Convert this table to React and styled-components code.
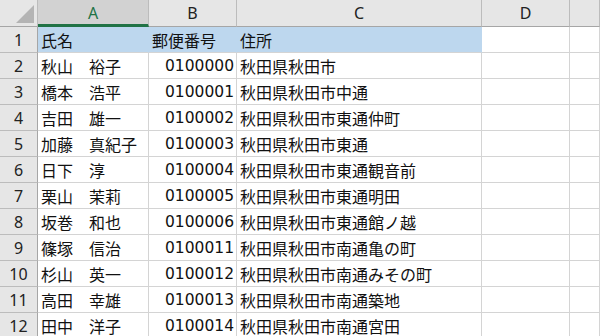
import React from "react";
import styled, { createGlobalStyle } from "styled-components";

const Global = createGlobalStyle`
  html, body { margin: 0; padding: 0; background: #fff; overflow: hidden; }
  body { font-family: "Noto Sans CJK JP", "Noto Sans", sans-serif; }
`;

const Sheet = styled.div`
  display: grid;
  grid-template-columns: 38px 111px 88px 245px 88px 1fr;
  grid-auto-rows: 26px;
  grid-template-rows: 27px;
  width: 600px;
  height: 336px;
  overflow: hidden;
`;

const Corner = styled.div`
  position: relative;
  background: #e6e6e6;
  border-right: 1px solid #bcbcbc;
  border-bottom: 1px solid #a6a6a6;
  box-sizing: border-box;
  svg { position: absolute; right: 3px; bottom: 3px; }
`;

const ColHead = styled.div`
  display: flex;
  align-items: center;
  justify-content: center;
  box-sizing: border-box;
  background: ${(p) => (p.$active ? "#d2d2d2" : "#e6e6e6")};
  border-right: 1px solid #bcbcbc;
  border-bottom: ${(p) => (p.$active ? "3px solid #217346" : "1px solid #a6a6a6")};
  color: ${(p) => (p.$active ? "#217346" : "#222")};
  font-family: "Noto Sans", sans-serif;
  font-size: 16px;
  padding-top: ${(p) => (p.$active ? "2px" : "0")};
`;

const RowHead = styled.div`
  display: flex;
  align-items: center;
  justify-content: center;
  box-sizing: border-box;
  background: #e6e6e6;
  border-right: 1px solid #a6a6a6;
  border-bottom: 1px solid #bcbcbc;
  color: #222;
  font-family: "Noto Sans", sans-serif;
  font-size: 16px;
`;

const Cell = styled.div`
  display: flex;
  align-items: center;
  justify-content: ${(p) => (p.$num ? "flex-end" : "flex-start")};
  box-sizing: border-box;
  padding: ${(p) => (p.$num ? "0 2px 0 0" : "0 0 0 3px")};
  background: ${(p) => (p.$fill ? "#bdd7ee" : "#fff")};
  border-right: 1px solid ${(p) => (p.$fill ? "#bdd7ee" : "#d4d4d4")};
  border-bottom: 1px solid #d4d4d4;
  color: #111;
  font-family: ${(p) => (p.$num ? '"DejaVu Sans", sans-serif' : '"Noto Sans CJK JP", sans-serif')};
  font-size: ${(p) => (p.$num ? "15.5px" : "16px")};
  white-space: pre;
  overflow: hidden;
`;

const rows = [
  ["秋山　裕子", "0100000", "秋田県秋田市"],
  ["橋本　浩平", "0100001", "秋田県秋田市中通"],
  ["吉田　雄一", "0100002", "秋田県秋田市東通仲町"],
  ["加藤　真紀子", "0100003", "秋田県秋田市東通"],
  ["日下　淳", "0100004", "秋田県秋田市東通観音前"],
  ["栗山　茉莉", "0100005", "秋田県秋田市東通明田"],
  ["坂巻　和也", "0100006", "秋田県秋田市東通館ノ越"],
  ["篠塚　信治", "0100011", "秋田県秋田市南通亀の町"],
  ["杉山　英一", "0100012", "秋田県秋田市南通みその町"],
  ["高田　幸雄", "0100013", "秋田県秋田市南通築地"],
  ["田中　洋子", "0100014", "秋田県秋田市南通宮田"],
];

export default function App() {
  return (
    <>
      <Global />
      <Sheet>
        <Corner>
          <svg width="18" height="18" viewBox="0 0 18 18">
            <polygon points="18,0 18,18 0,18" fill="#b4b4b4" />
          </svg>
        </Corner>
        <ColHead $active>A</ColHead>
        <ColHead>B</ColHead>
        <ColHead>C</ColHead>
        <ColHead>D</ColHead>
        <ColHead />

        <RowHead>1</RowHead>
        <Cell $fill>氏名</Cell>
        <Cell $fill>郵便番号</Cell>
        <Cell $fill>住所</Cell>
        <Cell />
        <Cell />

        {rows.map((r, i) => (
          <React.Fragment key={i}>
            <RowHead>{i + 2}</RowHead>
            <Cell>{r[0]}</Cell>
            <Cell $num>{r[1]}</Cell>
            <Cell>{r[2]}</Cell>
            <Cell />
            <Cell />
          </React.Fragment>
        ))}
      </Sheet>
    </>
  );
}
